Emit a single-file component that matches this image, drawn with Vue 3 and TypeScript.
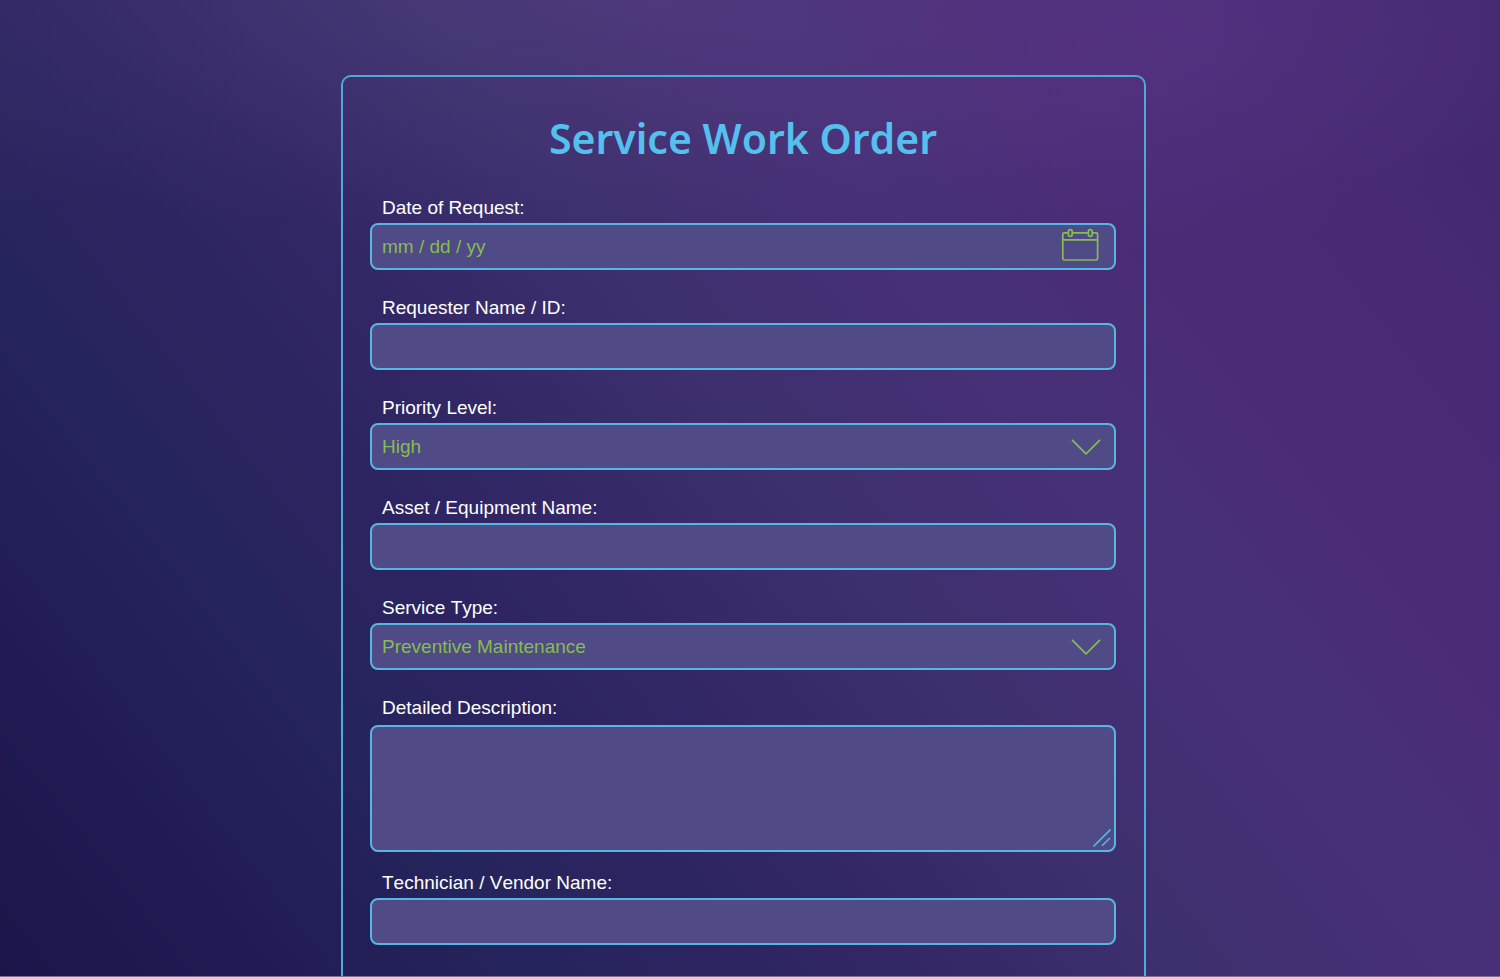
<script setup lang="ts">
import { ref } from 'vue'

interface Field {
  id: string
  label: string
  kind: 'date' | 'text' | 'select' | 'area'
  options?: string[]
}

const fields: Field[] = [
  { id: 'date', label: 'Date of Request:', kind: 'date' },
  { id: 'requester', label: 'Requester Name / ID:', kind: 'text' },
  { id: 'priority', label: 'Priority Level:', kind: 'select', options: ['High', 'Medium', 'Low'] },
  { id: 'asset', label: 'Asset / Equipment Name:', kind: 'text' },
  {
    id: 'service',
    label: 'Service Type:',
    kind: 'select',
    options: ['Preventive Maintenance', 'Repair', 'Inspection'],
  },
  { id: 'description', label: 'Detailed Description:', kind: 'area' },
  { id: 'technician', label: 'Technician / Vendor Name:', kind: 'text' },
]

const values = ref<Record<string, string>>({
  date: '',
  requester: '',
  priority: 'High',
  asset: '',
  service: 'Preventive Maintenance',
  description: '',
  technician: '',
})
</script>

<template>
  <main class="page">
    <form class="card" @submit.prevent>
      <h1 class="title">Service Work Order</h1>
      <div v-for="field in fields" :key="field.id" class="group" :class="field.kind">
        <label class="label" :for="field.id">{{ field.label }}</label>
        <div class="control">
          <select v-if="field.kind === 'select'" :id="field.id" v-model="values[field.id]" class="input">
            <option v-for="option in field.options" :key="option">{{ option }}</option>
          </select>
          <textarea v-else-if="field.kind === 'area'" :id="field.id" v-model="values[field.id]" class="input"></textarea>
          <input
            v-else
            :id="field.id"
            v-model="values[field.id]"
            class="input"
            type="text"
            :placeholder="field.kind === 'date' ? 'mm / dd / yy' : undefined"
          />

          <button v-if="field.kind === 'date'" class="calendar" type="button" aria-label="Choose date">
            <svg width="38" height="37" viewBox="0 0 38 37" fill="none" stroke="currentColor" stroke-width="1.7">
              <path d="M7.2 4.8H3.4Q1.8 4.8 1.8 6.4V30.4Q1.8 32 3.4 32H35Q36.6 32 36.6 30.4V6.4Q36.6 4.8 35 4.8H31.4M11.4 4.8H27.2M1.8 11.8H36.6" />
              <rect x="7.4" y="1.6" width="3.8" height="6.8" rx="1.9" />
              <rect x="27.4" y="1.6" width="3.8" height="6.8" rx="1.9" />
            </svg>
          </button>
          <svg v-if="field.kind === 'select'" class="chevron" width="30" height="16" viewBox="0 0 30 16" fill="none" stroke="currentColor" stroke-width="1.7">
            <path d="M1 0.8L15 14.8L29 0.8" />
          </svg>
          <svg v-if="field.kind === 'area'" class="grip" width="18" height="18" viewBox="0 0 18 18" fill="none" stroke="currentColor" stroke-width="1.6">
            <path d="M0.5 17.5L17.5 0.5M9 16.8L17 9" />
          </svg>
        </div>
      </div>
    </form>
  </main>
</template>

<style>
body {
  margin: 0;
}
</style>

<style scoped>
.page {
  box-sizing: border-box;
  display: flex;
  flex-direction: column;
  align-items: center;
  min-height: 100vh;
  padding: 75px 13px 0 0;
  border-bottom: 1px solid #7a7399;
  font-family: 'Liberation Sans', Arial, sans-serif;
  font-kerning: none;
  background:
    radial-gradient(ellipse 24% 24% at 78% 2%, rgba(92, 50, 140, 0.42), rgba(92, 50, 140, 0)),
    radial-gradient(ellipse 80% 24% at 40% 0%, rgba(120, 104, 160, 0.16), rgba(120, 104, 160, 0)),
    linear-gradient(
      52deg,
      #1c154a 0%,
      #201b53 12%,
      #26245c 24%,
      #2c2461 33%,
      #342867 42%,
      #3d2f6d 51%,
      #473077 66%,
      #4a2b75 78%,
      #442971 93%,
      #42286e 100%
    );
}

.card {
  box-sizing: border-box;
  flex: 1;
  width: 100%;
  max-width: 805px;
  padding: 31px 28px 31px 27px;
  border: 2px solid #4eaad6;
  border-bottom: 0;
  border-radius: 10px 10px 0 0;
}

.title {
  margin: 0 0 28px;
  color: #55bfee;
  font-family: 'Noto Sans', 'Open Sans', sans-serif;
  font-size: 41px;
  font-weight: 600;
  line-height: 60px;
  text-align: center;
}

.group {
  display: grid;
  gap: 4px;
}

.group + .group {
  margin-top: 26px;
}

.group.area {
  gap: 6px;
}

.group.area + .group {
  margin-top: 19px;
}

.label {
  padding-left: 12px;
  color: #fff;
  font-size: 19px;
  line-height: 23px;
}

.control {
  display: grid;
  align-items: center;
  border: 2px solid #56b7e4;
  border-radius: 8px;
  background: #504a86;
  color: #85bd50;
}

.control > * {
  grid-area: 1 / 1;
}

.input {
  box-sizing: border-box;
  width: 100%;
  height: 43px;
  margin: 0;
  padding: 0 10px;
  border: 0;
  border-radius: 6px;
  outline: 0;
  appearance: none;
  background: transparent;
  color: inherit;
  font: inherit;
  font-size: 19px;
}

.area .input {
  display: block;
  height: 123px;
  padding: 10px;
  resize: none;
}

.input::placeholder {
  color: inherit;
  opacity: 1;
}

.calendar {
  display: block;
  justify-self: end;
  margin-right: 15px;
  padding: 0;
  border: 0;
  background: none;
  color: inherit;
}

.calendar svg {
  display: block;
}

.chevron {
  justify-self: end;
  margin-right: 13px;
  pointer-events: none;
}

.grip {
  align-self: end;
  justify-self: end;
  margin: 0 3px 3px 0;
  color: #56b7e4;
  pointer-events: none;
}
</style>
